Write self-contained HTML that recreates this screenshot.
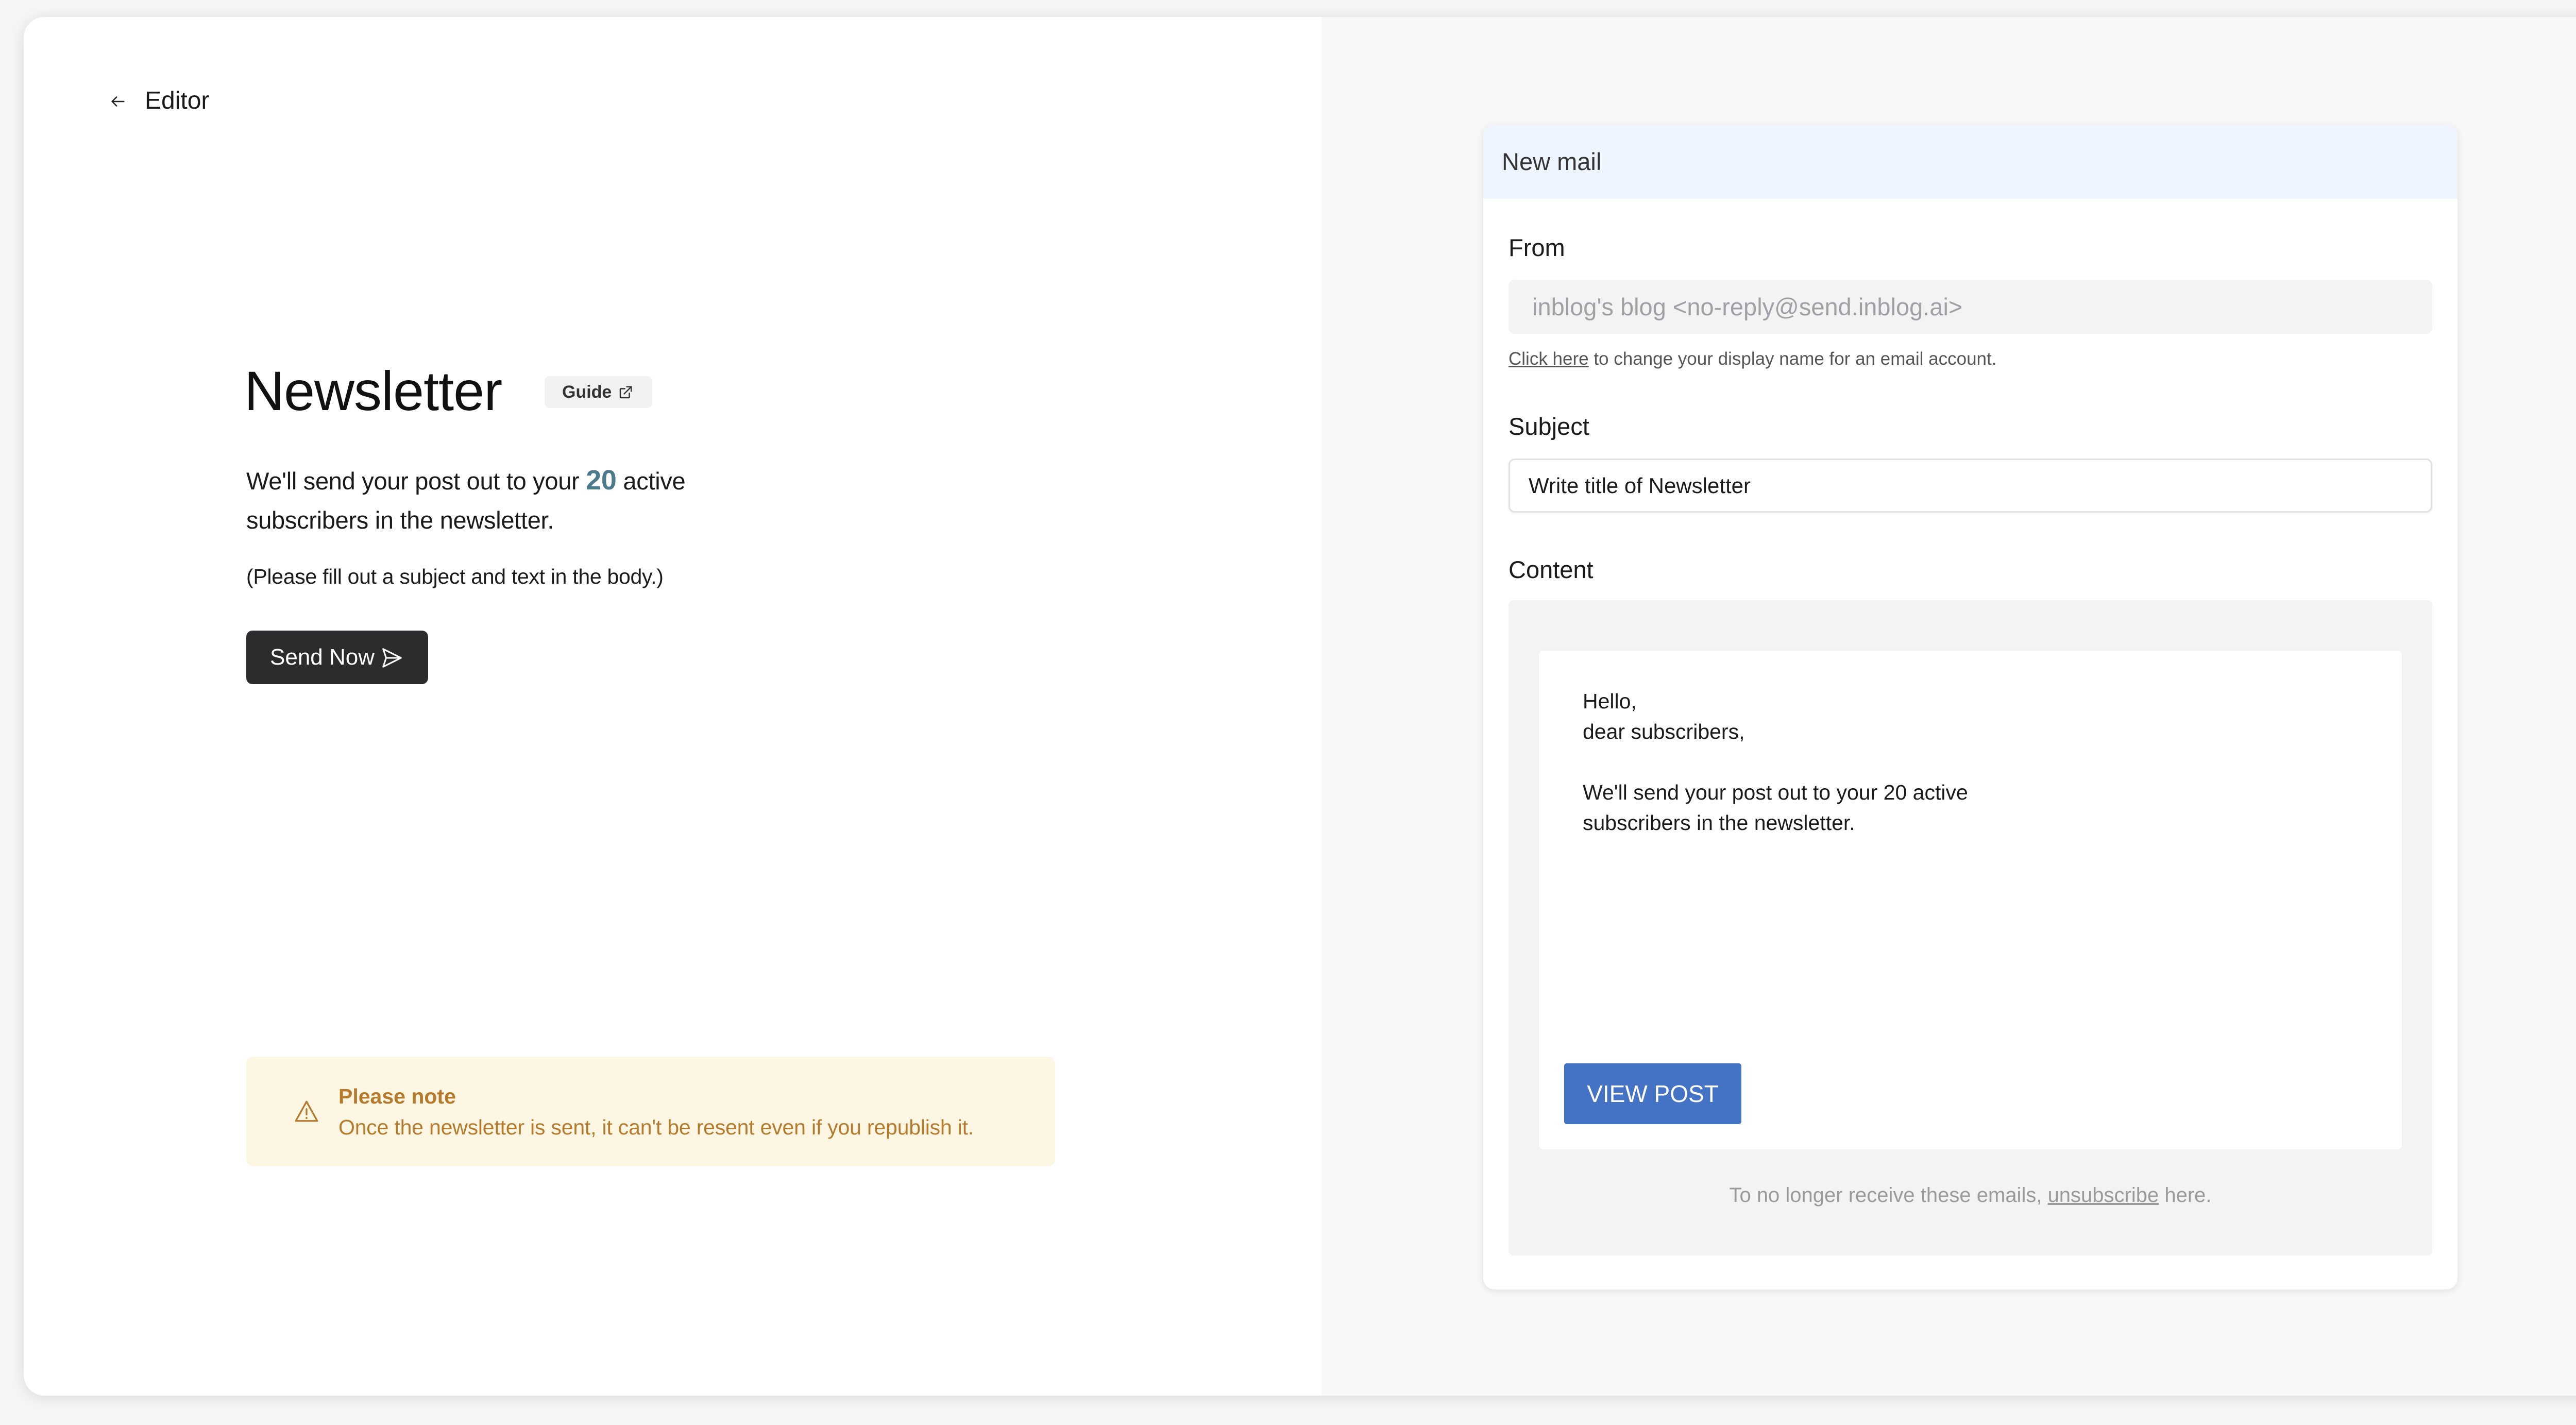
<!DOCTYPE html>
<html><head><meta charset="utf-8"><style>
*{margin:0;padding:0;box-sizing:border-box}
body{width:5130px;height:2766px;background:#f6f6f6;font-family:"Liberation Sans",sans-serif;position:relative;overflow:hidden;color:#1a1a1a}
.card{position:absolute;left:46px;top:33px;width:5038px;height:2676px;background:#fff;border-radius:40px;box-shadow:0 4px 30px rgba(0,0,0,.12);overflow:hidden}
.rp{position:absolute;left:2519px;top:0;width:2519px;height:2676px;background:#f8f8f8}
.a{position:absolute;white-space:nowrap}
</style></head><body>
<div class="card"><div class="rp"></div></div>

<svg class="a" style="left:212px;top:180px" width="34" height="34" viewBox="0 0 24 24" fill="none" stroke="#222" stroke-width="1.8" stroke-linecap="round" stroke-linejoin="round"><path d="M20 12H4M10 6l-6 6 6 6"/></svg>
<div class="a" style="left:281px;top:168px;font-size:48px;line-height:56px;color:#1a1a1a">Editor</div>

<div class="a" style="left:474px;top:694px;font-size:108px;line-height:130px;color:#111;letter-spacing:-1px">Newsletter</div>
<div class="a" style="left:1057px;top:730px;width:209px;height:62px;background:#f2f2f2;border-radius:10px;font-size:34px;font-weight:bold;line-height:62px;padding-left:34px;color:#333">Guide
<svg style="position:absolute;left:142px;top:17px" width="30" height="30" viewBox="0 0 24 24" fill="none" stroke="#333" stroke-width="2" stroke-linecap="round"><path d="M18 13v6a1 1 0 0 1-1 1H5a1 1 0 0 1-1-1V7a1 1 0 0 1 1-1h6M14 3h7v7M10 14L21 3"/></svg></div>

<div class="a" style="left:478px;top:894px;font-size:47px;line-height:76px;color:#1a1a1a;letter-spacing:-.3px">We'll send your post out to your <b style="color:#4b7a8c;font-size:54px">20</b> active<br>subscribers in the newsletter.</div>
<div class="a" style="left:478px;top:1094px;font-size:41px;line-height:50px;letter-spacing:-.3px">(Please fill out a subject and text in the body.)</div>

<div class="a" style="left:478px;top:1224px;width:353px;height:104px;background:#2c2c2e;border-radius:12px;color:#fff;font-size:44px;line-height:104px;padding-left:46px">Send Now
<svg style="position:absolute;left:260px;top:30px" width="46" height="46" viewBox="0 0 24 24" fill="none" stroke="#fff" stroke-width="1.6" stroke-linejoin="round"><path d="M3 3l18 9-18 9 3-9-3-9zM6 12h15"/></svg></div>

<div class="a" style="left:478px;top:2051px;width:1570px;height:213px;background:#fdf6e3;border-radius:14px"></div>
<svg class="a" style="left:570px;top:2132px" width="50" height="50" viewBox="0 0 24 24" fill="none" stroke="#b67a2c" stroke-width="1.6" stroke-linejoin="round" stroke-linecap="round"><path d="M12 3L2 21h20L12 3zM12 10v5M12 18v.5"/></svg>
<div class="a" style="left:657px;top:2103px;font-size:41px;line-height:50px;font-weight:bold;color:#b67a2c">Please note</div>
<div class="a" style="left:657px;top:2163px;font-size:41px;line-height:50px;color:#b67a2c;letter-spacing:-.2px">Once the newsletter is sent, it can't be resent even if you republish it.</div>

<div class="a" style="left:2879px;top:242px;width:1891px;height:2261px;background:#fff;border-radius:22px;box-shadow:0 3px 14px rgba(0,0,0,.1);overflow:hidden">
<div style="height:144px;background:#eef5fe"></div></div>
<div class="a" style="left:2915px;top:286px;font-size:47px;line-height:56px;color:#333">New mail</div>
<div class="a" style="left:2928px;top:453px;font-size:47px;line-height:56px;color:#1a1a1a">From</div>
<div class="a" style="left:2928px;top:543px;width:1793px;height:105px;background:#f3f3f3;border-radius:12px;font-size:47px;line-height:105px;padding-left:46px;color:#a0a0a6">inblog's blog &lt;no-reply@send.inblog.ai&gt;</div>
<div class="a" style="left:2928px;top:676px;font-size:35px;line-height:42px;color:#555"><u>Click here</u> to change your display name for an email account.</div>
<div class="a" style="left:2928px;top:800px;font-size:47px;line-height:56px">Subject</div>
<div class="a" style="left:2928px;top:890px;width:1793px;height:105px;background:#fff;border:3px solid #e2e2e2;border-radius:12px;box-shadow:0 2px 4px rgba(0,0,0,.05);font-size:42px;line-height:99px;padding-left:36px;color:#1a1a1a">Write title of Newsletter</div>
<div class="a" style="left:2928px;top:1078px;font-size:47px;line-height:56px">Content</div>
<div class="a" style="left:2928px;top:1165px;width:1793px;height:1272px;background:#f3f3f3;border-radius:10px"></div>
<div class="a" style="left:2987px;top:1263px;width:1675px;height:968px;background:#fff;border-radius:8px"></div>
<div class="a" style="left:3072px;top:1332px;font-size:41px;line-height:59px;color:#1a1a1a">Hello,<br>dear subscribers,<br><br>We'll send your post out to your 20 active<br>subscribers in the newsletter.</div>
<div class="a" style="left:3036px;top:2064px;width:344px;height:118px;background:#4472c4;border-radius:5px;color:#fff;font-size:46px;line-height:118px;text-align:center">VIEW POST</div>
<div class="a" style="left:2928px;width:1793px;top:2296px;text-align:center;font-size:40px;line-height:48px;color:#9a9a9a">To no longer receive these emails, <u>unsubscribe</u> here.</div>
</body></html>
